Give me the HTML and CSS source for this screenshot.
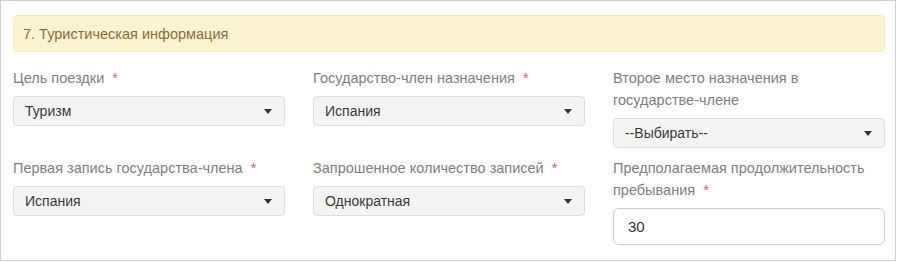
FILE: index.html
```html
<!DOCTYPE html>
<html lang="ru">
<head>
    <meta charset="UTF-8">
    <title>Туристическая информация</title>
    <link rel="stylesheet" href="styles.css">
</head>
<body>
    <div class="panel">
        <div class="section-title">7. Туристическая информация</div>

        <div class="form-grid">
            <div class="field">
                <label>Цель поездки <span class="req">*</span></label>
                <div class="select">
                    <span>Туризм</span>
                    <svg class="caret" width="8" height="5" viewBox="0 0 8 5"><path d="M0 0h8L4 5z"/></svg>
                </div>
            </div>
            <div class="field">
                <label>Государство-член назначения <span class="req">*</span></label>
                <div class="select">
                    <span>Испания</span>
                    <svg class="caret" width="8" height="5" viewBox="0 0 8 5"><path d="M0 0h8L4 5z"/></svg>
                </div>
            </div>
            <div class="field">
                <label>Второе место назначения в государстве-члене</label>
                <div class="select">
                    <span>--Выбирать--</span>
                    <svg class="caret" width="8" height="5" viewBox="0 0 8 5"><path d="M0 0h8L4 5z"/></svg>
                </div>
            </div>

            <div class="field">
                <label>Первая запись государства-члена <span class="req">*</span></label>
                <div class="select">
                    <span>Испания</span>
                    <svg class="caret" width="8" height="5" viewBox="0 0 8 5"><path d="M0 0h8L4 5z"/></svg>
                </div>
            </div>
            <div class="field">
                <label>Запрошенное количество записей <span class="req">*</span></label>
                <div class="select">
                    <span>Однократная</span>
                    <svg class="caret" width="8" height="5" viewBox="0 0 8 5"><path d="M0 0h8L4 5z"/></svg>
                </div>
            </div>
            <div class="field">
                <label>Предполагаемая продолжительность пребывания <span class="req">*</span></label>
                <input class="text-input" type="text" value="30">
            </div>
        </div>
    </div>
</body>
</html>
```

FILE: styles.css
```css
body {
    margin: 0;
    background: #fff;
    font-family: 'Liberation Sans', Arial, sans-serif;
    font-size: 14.5px;
}

.panel {
    box-sizing: border-box;
    width: 896px;
    height: 261px;
    padding: 14px 10px 0 12px;
    border: 1px solid #cfcfcf;
}

.section-title {
    box-sizing: border-box;
    height: 37px;
    padding: 0 9px;
    line-height: 36px;
    background: #fcf3d0;
    border: 1px solid #f8ebbf;
    border-radius: 4px;
    color: #8a6d3b;
}

.form-grid {
    display: grid;
    grid-template-columns: repeat(3, 272px);
    column-gap: 28px;
    row-gap: 9px;
    margin-top: 15px;
}

.field label {
    display: block;
    line-height: 22px;
    margin-bottom: 7px;
    color: #808080;
}

.req {
    color: #e05a5a;
    margin-left: 4px;
}

.select {
    box-sizing: border-box;
    display: flex;
    align-items: center;
    justify-content: space-between;
    height: 30px;
    padding: 0 12px 0 11px;
    background: #f4f4f4;
    border: 1px solid #dedede;
    border-radius: 4px;
    color: #3a3a3a;
    font-size: 14px;
}

.caret {
    fill: #333;
}

.text-input {
    box-sizing: border-box;
    display: block;
    width: 100%;
    height: 37px;
    padding: 0 14px;
    border: 1px solid #cccccc;
    border-radius: 6px;
    font-family: inherit;
    font-size: 15px;
    color: #333;
    outline: none;
}
```
